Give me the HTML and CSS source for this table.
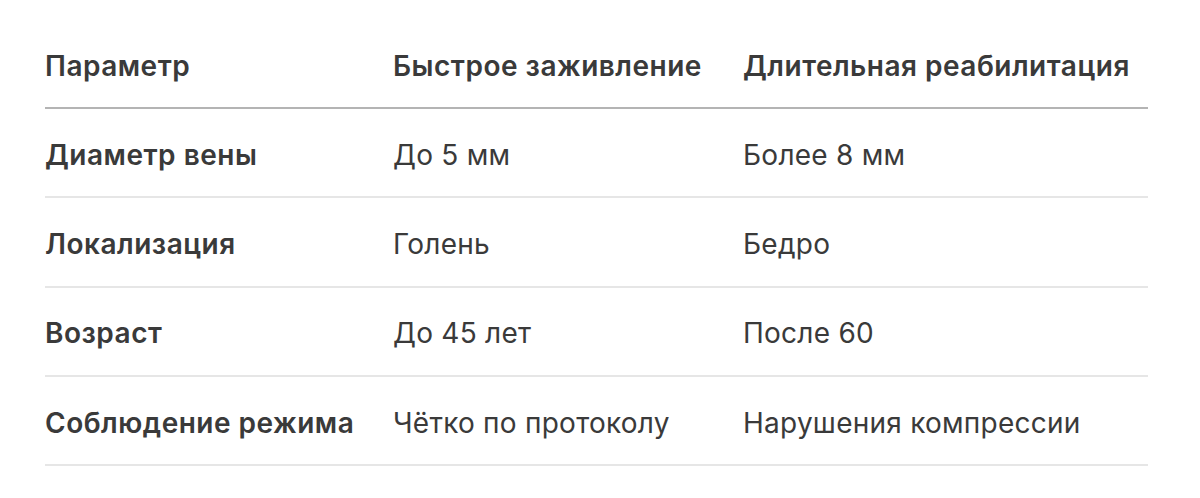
FILE: index.html
```html
<!DOCTYPE html>
<html lang="ru">
<head>
<meta charset="utf-8">
<link rel="stylesheet" href="styles.css">
</head>
<body>
<table class="cmp">
  <colgroup>
    <col class="c1"><col class="c2"><col class="c3">
  </colgroup>
  <thead>
    <tr><th>Параметр</th><th>Быстрое заживление</th><th>Длительная реабилитация</th></tr>
  </thead>
  <tbody>
    <tr><td class="key">Диаметр вены</td><td>До 5 мм</td><td>Более 8 мм</td></tr>
    <tr><td class="key">Локализация</td><td>Голень</td><td>Бедро</td></tr>
    <tr><td class="key">Возраст</td><td>До 45 лет</td><td>После 60</td></tr>
    <tr><td class="key">Соблюдение режима</td><td>Чётко по протоколу</td><td>Нарушения компрессии</td></tr>
  </tbody>
</table>
</body>
</html>
```
FILE: styles.css
```css
html, body {
  margin: 0;
  padding: 0;
  background: #fff;
}
body {
  font-family: Inter, "Liberation Sans", sans-serif;
  color: #3a3a3a;
  font-size: 28px;
  letter-spacing: 0.25px;
}
.cmp {
  margin-left: 45px;
  width: 1103px;
  border-collapse: collapse;
  table-layout: fixed;
}
.c1 { width: 348px; }
.c2 { width: 350px; }
.c3 { width: 405px; }
th, td {
  text-align: left;
  padding: 0;
  line-height: 36px;
  white-space: nowrap;
}
th {
  font-weight: 600;
  letter-spacing: 0.5px;
  padding-top: 48px;
  padding-bottom: 23px;
  border-bottom: 2px solid #b4b4b4;
}
td {
  font-weight: 400;
  padding-top: 27.7px;
  padding-bottom: 23.6px;
  border-bottom: 2px solid #e6e6e6;
}
td.key {
  font-weight: 600;
  letter-spacing: 0.5px;
}
```
